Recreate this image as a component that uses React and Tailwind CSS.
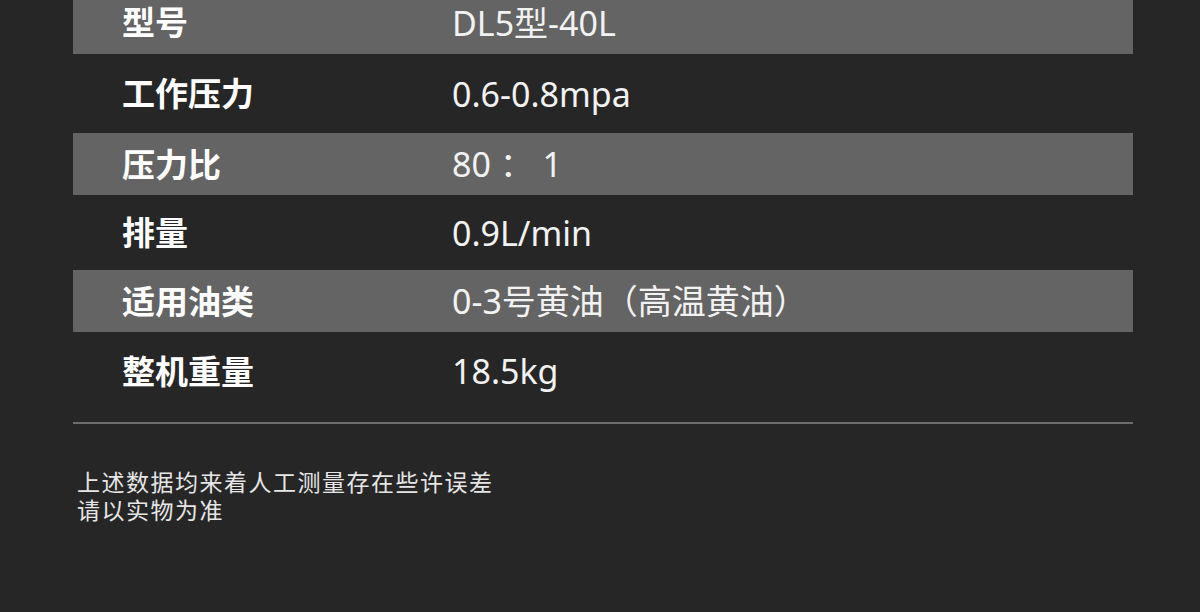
const specs = [
  { label: '型号', value: 'DL5型-40L', shade: true, h: 'h-[63px]' },
  { label: '工作压力', value: '0.6-0.8mpa', shade: false, h: 'h-[79px]' },
  { label: '压力比', value: '80 ： 1', shade: true, h: 'h-[62px]' },
  { label: '排量', value: '0.9L/min', shade: false, h: 'h-[75px]' },
  { label: '适用油类', value: '0-3号黄油（高温黄油）', shade: true, h: 'h-[62px]' },
  { label: '整机重量', value: '18.5kg', shade: false, h: 'h-[78px]' },
];

export default function App() {
  return (
    <div
      className="w-full h-[612px] overflow-hidden bg-[#262626] text-white"
      style={{ fontFamily: '"Noto Sans", "Noto Sans CJK SC", sans-serif' }}
    >
      <div className="ml-[73px] w-[1060px] -mt-[9px]">
        {specs.map((row) => (
          <div
            key={row.label}
            className={`flex items-center ${row.h} ${row.shade ? 'bg-[#646464]' : 'bg-[#262626]'}`}
          >
            <div className="w-[379px] pl-[49px] text-[33px] font-bold leading-none">
              {row.label}
            </div>
            <div className="text-[34px] leading-none text-[#f2f2f2]">{row.value}</div>
          </div>
        ))}
        {/* divider */}
        <div className="mt-[12px] h-[2px] bg-[#6c6c6c]"></div>
        <div className="mt-[44px] pl-[4px] text-[23px] leading-[28px] tracking-[1.5px] text-[#e6e6e6]">
          <p>上述数据均来着人工测量存在些许误差</p>
          <p>请以实物为准</p>
        </div>
      </div>
    </div>
  );
}
